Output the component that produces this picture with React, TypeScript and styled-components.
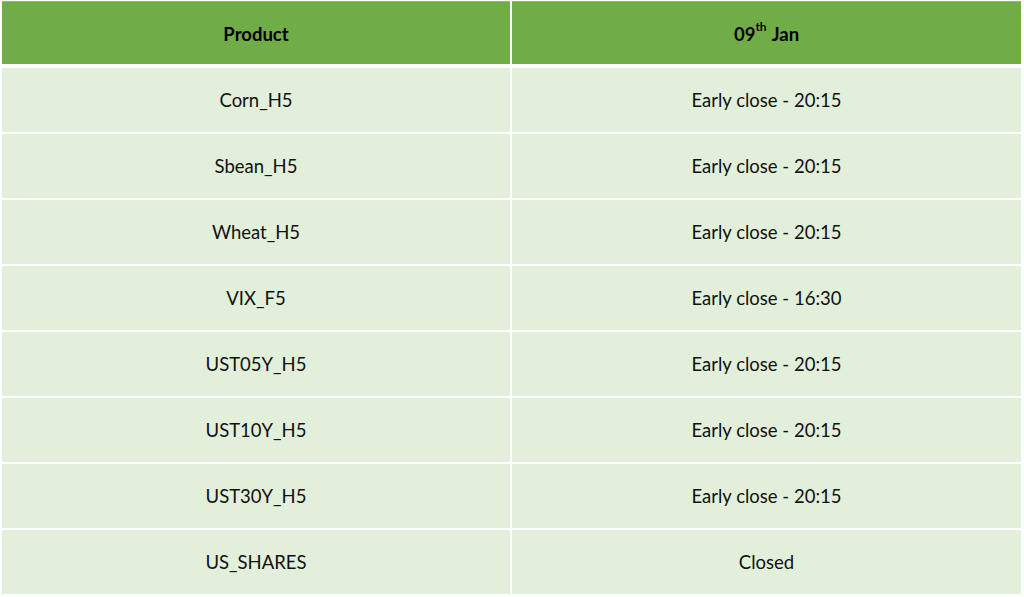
import React from "react";
import styled, { createGlobalStyle } from "styled-components";

const Global = createGlobalStyle`
  html, body { margin: 0; padding: 0; background: #ffffff; }
  body { font-family: "Lato", "Open Sans", "Liberation Sans", sans-serif; color: #000; }
`;

const Table = styled.div`
  display: grid;
  grid-template-columns: 508px 509px;
  column-gap: 2px;
  row-gap: 2px;
  padding: 1px 0 0 2px;
  width: 1019px;
`;

const HeadCell = styled.div`
  height: 62px;
  border-top: 1px solid #8dbf6b;
  background: #70ad47;
  margin-bottom: 2px;
  display: flex;
  align-items: center;
  justify-content: center;
  padding-top: 1px;
  box-sizing: border-box;
  height: 63px;
  font-weight: 700;
  font-size: 18.5px;
`;

const Cell = styled.div`
  height: 64px;
  background: #e2efda;
  display: flex;
  align-items: center;
  justify-content: center;
  font-size: 18.5px;
  color: #111;
`;

const Sup = styled.sup`
  font-size: 12px;
  line-height: 0;
  vertical-align: 0;
  position: relative;
  top: -7px;
  margin-right: 5px;
`;

const rows: [string, string][] = [
  ["Corn_H5", "Early close - 20:15"],
  ["Sbean_H5", "Early close - 20:15"],
  ["Wheat_H5", "Early close - 20:15"],
  ["VIX_F5", "Early close - 16:30"],
  ["UST05Y_H5", "Early close - 20:15"],
  ["UST10Y_H5", "Early close - 20:15"],
  ["UST30Y_H5", "Early close - 20:15"],
  ["US_SHARES", "Closed"],
];

export default function App() {
  return (
    <>
      <Global />
      <Table>
        <HeadCell>Product</HeadCell>
        <HeadCell>
          09<Sup>th</Sup>Jan
        </HeadCell>
        {rows.map(([p, v]) => (
          <React.Fragment key={p}>
            <Cell>{p}</Cell>
            <Cell>{v}</Cell>
          </React.Fragment>
        ))}
      </Table>
    </>
  );
}
